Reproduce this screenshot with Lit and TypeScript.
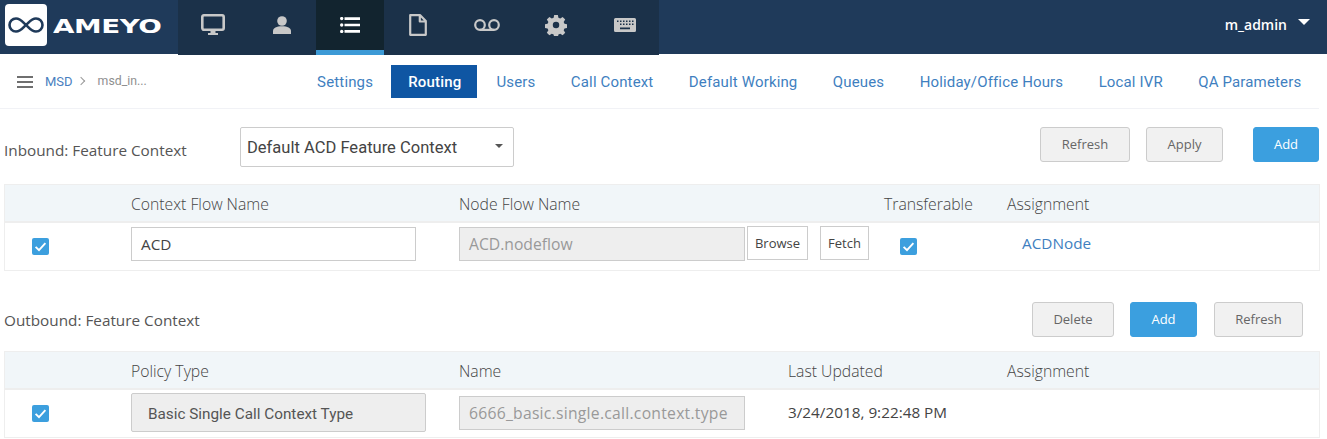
import { LitElement, html, css, svg } from "lit";
import { customElement } from "lit/decorators.js";

const icons = [
  { w: 24, h: 22, p: svg`<rect x="1.300" y="1.300" width="21.400" height="14.400" rx="1.600" fill="none" stroke="#c8c8c8" stroke-width="2.600"/><path d="M9.500 17h5v2h2.500v2H7v-2h2.500z" fill="#c8c8c8"/>` },
  { w: 18, h: 18, p: svg`<circle cx="9" cy="5" r="4.800" fill="#c8c8c8"/><path d="M0 18v-3c0-3 3.500-4.800 9-4.800s9 1.800 9 4.800v3z" fill="#c8c8c8"/>` },
  { w: 20, h: 16, p: svg`<path d="M4.500 0.300H20v2.600H4.500zM4.500 6.700H20v2.600H4.500zM4.500 13.100H20v2.600H4.500z" fill="#fff"/><circle cx="1.700" cy="1.600" r="1.700" fill="#fff"/><circle cx="1.700" cy="8" r="1.700" fill="#fff"/><circle cx="1.700" cy="14.400" r="1.700" fill="#fff"/>` },
  { w: 18, h: 22, p: svg`<path d="M1.200 1.200h10L16.800 7v13.800H1.200z M10.800 1.500V7.500h6" fill="none" stroke="#c8c8c8" stroke-width="2.200" stroke-linejoin="round"/>` },
  { w: 26, h: 12, p: svg`<circle cx="6" cy="6" r="4.800" fill="none" stroke="#c8c8c8" stroke-width="2.200"/><circle cx="20" cy="6" r="4.800" fill="none" stroke="#c8c8c8" stroke-width="2.200"/><path d="M6 9.800h14V12H6z" fill="#c8c8c8"/>` },
  { w: 22, h: 22, p: svg`<path fill="#c8c8c8" fill-rule="evenodd" d="M9 0h4l.6 3 2 .9 2.600-1.700 2.800 2.800-1.700 2.600.9 2 3 .6v0 4l-3 .6-.9 2 1.700 2.600-2.800 2.800-2.600-1.700-2 .9-.6 3H9l-.6-3-2-.9-2.600 1.700-2.800-2.800 1.700-2.600-.9-2-3-.6v-4l3-.6.9-2L1 5 3.800 2.200l2.600 1.700 2-.9zM11 7.500a3.500 3.500 0 1 0 0 7 3.500 3.500 0 0 0 0-7z" transform="translate(.9 .9) scale(.92)"/>` },
  { w: 22, h: 14, p: svg`<path fill="#c8c8c8" fill-rule="evenodd" d="M1.500 0h19A1.500 1.500 0 0 1 22 1.500v11a1.500 1.500 0 0 1-1.500 1.500h-19A1.500 1.500 0 0 1 0 12.500v-11A1.500 1.500 0 0 1 1.500 0zM3 2.500V4h1.500V2.500zm3 0V4h1.500V2.500zm3 0V4h1.500V2.500zm3 0V4h1.500V2.500zm3 0V4h1.500V2.500zm3 0V4h1.500V2.500zm-12 3V7h1.500V5.500zm3 0V7h1.500V5.500zm3 0V7h1.500V5.500zm3 0V7h1.500V5.500zm3 0V7h1.500V5.500zM6 9.500v1.700h10V9.500z"/>` },
];

const tabs = ["Settings", "Routing", "Users", "Call Context", "Default Working", "Queues", "Holiday/Office Hours", "Local IVR", "QA Parameters"];

const check = html`<svg class="check" viewBox="0 0 17 17" width="17" height="17"><rect width="17" height="17" rx="2" fill="#3c9fde"/><path d="M3.600 8.800l3.400 3.400 6.400-7" fill="none" stroke="#fff" stroke-width="1.900"/></svg>`;

@customElement("app-root")
export class AppRoot extends LitElement {
  static styles = css`
    :host { display: block; width: 1327px; height: 439px; overflow: hidden; background: #fff; font-family: "Open Sans", sans-serif; color: #555; }
    * { box-sizing: border-box; }
    .top { height: 54px; background: #1f3a5a; display: flex; color: #fff; }
    .logo { width: 178px; display: flex; align-items: center; padding-left: 5px; gap: 6px; flex: none; }
    .logo-box { width: 42px; height: 42px; margin-top: -4px; background: #fff; border-radius: 4px; display: flex; align-items: center; justify-content: center; }
    .word { font-family: "DejaVu Sans", sans-serif; font-weight: 700; font-size: 19px; color: #fff; display: inline-block; transform: scaleX(1.46); transform-origin: left center; letter-spacing: -.3px; margin-top: -3px; }
    .icons { display: flex; height: 55px; background: #1b3149; position: relative; z-index: 1; }
    .ic { width: 68.750px; display: flex; align-items: center; justify-content: center; padding-bottom: 6px; }
    .ic:nth-child(-n+2) { width: 69px; }
    .ic.on { width: 68px; background: #12242f; border-bottom: 5px solid #3c9ad6; padding-bottom: 1px; }
    .user { margin-left: auto; display: flex; align-items: center; padding-right: 17px; font-size: 14px; gap: 11px; font-weight: 600; padding-bottom: 5px; }
    .caret { width: 0; height: 0; border-left: 6.500px solid transparent; border-right: 6.500px solid transparent; border-top: 6.500px solid #fff; margin-top: -6px; }
    .sub { height: 55px; margin-right: 8px; display: flex; align-items: center; border-bottom: 1px solid #f1f2f6; font-family: Roboto, sans-serif; }
    .crumb { display: flex; align-items: center; padding-left: 17px; font-size: 13px; }
    .burger { width: 16px; height: 12px; border-top: 2px solid #6f6f6f; border-bottom: 2px solid #6f6f6f; position: relative; margin-right: 12px; margin-top: 2px; }
    .burger::after { content: ""; position: absolute; left: 0; right: 0; top: 3px; height: 2px; background: #6f6f6f; }
    .crumb a { color: #4a7fc0; }
    .sep { width: 6px; height: 6px; border-top: 1.500px solid #999; border-right: 1.500px solid #999; transform: rotate(45deg); margin: 0 14px 0 5px; }
    .crumb span { color: #8f8f8f; font-size: 12.300px; }
    .tabs { margin-left: auto; display: flex; align-items: center; }
    .tab { font-size: 15px; letter-spacing: .15px; color: #3f7fbf; padding: 0 17.700px; height: 33px; line-height: 34px; white-space: nowrap; }
    .tab.on { background: #0f56a3; color: #fff; font-weight: 500; padding: 0 16px 0 17px; margin: 0 1.500px 0 .5px; }
    .sec { display: flex; align-items: center; padding-left: 4px; font-size: 15.300px; color: #555; }
    .s1 { height: 40px; margin-top: 18px; }
    .s2 { height: 35px; margin-top: 31px; margin-right: 24px; }
    .lab { width: 236px; padding-top: 6px; }
    .s2 .lab { padding-top: 0; }
    .sel { width: 274px; height: 40px; border: 1px solid #ccc; border-radius: 2px; display: flex; align-items: center; padding: 0 10px 0 6px; font-size: 16.550px; font-family: Roboto, sans-serif; color: #444; justify-content: space-between; }
    .tri { width: 0; height: 0; border-left: 4px solid transparent; border-right: 4px solid transparent; border-top: 4px solid #555; margin-top: -2px; }
    .acts { margin-left: auto; display: flex; margin-top: -6px; margin-right: 8px; }
    .s2 .acts { margin: 0 0 0 auto; }
    .btn { height: 35px; border: 1px solid #ccc; background: #f1f1f1; color: #666; border-radius: 3px; font-size: 13px; display: flex; align-items: center; justify-content: center; }
    .s2 .btn { padding-bottom: 2px; }
    .btn.p { background: #3b9fdf; border-color: #3b9fdf; color: #fff; }
    .table { margin: 0 7px 0 4px; border: 1px solid #eee; }
    .t1 { margin-top: 17px; }
    .t2 { margin-top: 14px; }
    .row { display: grid; align-items: center; }
    .t1 .row { grid-template-columns: 126px 328px 425px 123px 1fr; }
    .t2 .row { grid-template-columns: 126px 328px 329px 219px 1fr; }
    .head { height: 38px; background: #f1f6f9; border-bottom: 2px solid #eee; font-size: 15.750px; font-weight: 300; color: #444; padding-top: 1px; }
    .body { height: 47px; font-size: 15.300px; padding-bottom: 6px; }
    .t2 .body { padding-bottom: 3px; }
    .cb { padding-left: 27px; display: flex; padding-top: 6px; }
    .inp { height: 34px; border: 1px solid #ccc; display: flex; align-items: center; padding: 0 9px; color: #444; white-space: nowrap; }
    .ro { background: #eee; color: #999; font-size: 15.700px; }
    .flow { display: flex; align-items: center; }
    .small { height: 34px; border: 1px solid #ccc; font-size: 13px; display: flex; align-items: center; justify-content: center; color: #444; background: #fff; margin-top: -2px; }
    .link { color: #3f7fbf; padding-left: 15px; margin-top: -2px; font-size: 15.300px; }
    .policy { height: 39px; width: 295px; background: #eee; border: 1px solid #ccc; border-radius: 2px; display: flex; align-items: center; padding: 3px 0 0 16px; font-family: Roboto, sans-serif; font-size: 15.300px; color: #555; }
    .date { color: #444; }
    .t2 .cb { padding-top: 3px; }
    .t2 .ro { letter-spacing: .26px; margin-top: 1px; }
  `;

  private btn(label: string, w: number, ml: number, primary = false) {
    return html`<div class="btn ${primary ? "p" : ""}" style="width:${w}px;margin-left:${ml}px">${label}</div>`;
  }

  render() {
    return html`
      <div class="top">
        <div class="logo">
          <div class="logo-box"><svg viewBox="0 0 40 20" width="40" height="20"><path d="M10 3.500c5 0 7 4 10 6.500s5 6.500 10 6.500a6.500 6.500 0 0 0 0-13c-5 0-7 4-10 6.500s-5 6.500-10 6.500a6.500 6.500 0 0 1 0-13z" fill="none" stroke="#1f3a5a" stroke-width="2.600"/></svg></div>
          <span class="word">AMEYO</span>
        </div>
        <div class="icons">
          ${icons.map((ic, i) => html`<div class="ic ${i === 2 ? "on" : ""}"><svg viewBox="0 0 ${ic.w} ${ic.h}" width="${ic.w}" height="${ic.h}">${ic.p}</svg></div>`)}
        </div>
        <div class="user">m_admin <span class="caret"></span></div>
      </div>
      <div class="sub">
        <div class="crumb"><div class="burger"></div><a>MSD</a><div class="sep"></div><span>msd_in...</span></div>
        <div class="tabs">${tabs.map((t) => html`<div class="tab ${t === "Routing" ? "on" : ""}">${t}</div>`)}</div>
      </div>
      <div class="sec s1">
        <div class="lab">Inbound: Feature Context</div>
        <div class="sel">Default ACD Feature Context<span class="tri"></span></div>
        <div class="acts">${this.btn("Refresh", 90, 0)}${this.btn("Apply", 77, 16)}${this.btn("Add", 66, 30, true)}</div>
      </div>
      <div class="table t1">
        <div class="row head"><div></div><div>Context Flow Name</div><div>Node Flow Name</div><div>Transferable</div><div>Assignment</div></div>
        <div class="row body">
          <div class="cb">${check}</div>
          <div><div class="inp" style="width:285px">ACD</div></div>
          <div class="flow">
            <div class="inp ro" style="width:286px">ACD.nodeflow</div>
            <div class="small" style="width:61px;margin-left:2px">Browse</div>
            <div class="small" style="width:49px;margin-left:12px">Fetch</div>
          </div>
          <div class="cb" style="padding-left:16px">${check}</div>
          <div class="link">ACDNode</div>
        </div>
      </div>
      <div class="sec s2">
        <div class="lab">Outbound: Feature Context</div>
        <div class="acts">${this.btn("Delete", 82, 0)}${this.btn("Add", 67, 16, true)}${this.btn("Refresh", 89, 17)}</div>
      </div>
      <div class="table t2">
        <div class="row head"><div></div><div>Policy Type</div><div>Name</div><div>Last Updated</div><div>Assignment</div></div>
        <div class="row body">
          <div class="cb">${check}</div>
          <div><div class="policy">Basic Single Call Context Type</div></div>
          <div><div class="inp ro" style="width:286px">6666_basic.single.call.context.type</div></div>
          <div class="date">3/24/2018, 9:22:48 PM</div>
          <div></div>
        </div>
      </div>
    `;
  }
}
